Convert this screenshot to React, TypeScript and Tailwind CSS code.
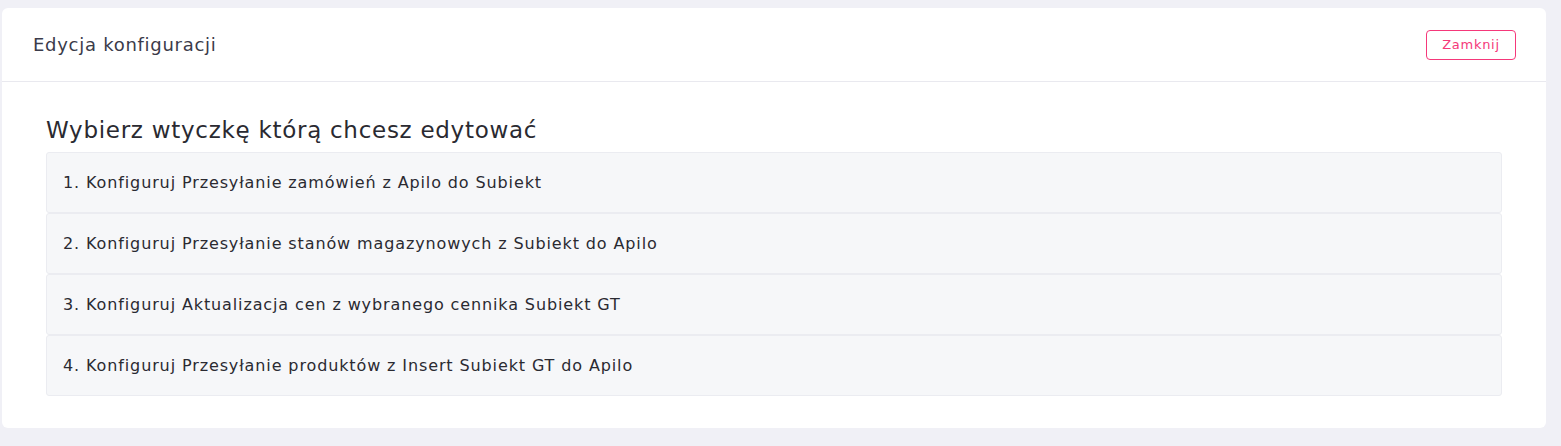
const items = [
  "1. Konfiguruj Przesyłanie zamówień z Apilo do Subiekt",
  "2. Konfiguruj Przesyłanie stanów magazynowych z Subiekt do Apilo",
  "3. Konfiguruj Aktualizacja cen z wybranego cennika Subiekt GT",
  "4. Konfiguruj Przesyłanie produktów z Insert Subiekt GT do Apilo",
];

export default function App() {
  return (
    <div className="min-h-[446px] bg-[#f0f0f6] pt-2 pl-[2px] pr-[15px] pb-[18px] font-['DejaVu_Sans',sans-serif] tracking-[0.045em] text-[#2a2a31]">
      <div className="rounded-md bg-white">
        <div className="flex h-[74px] items-center justify-between border-b border-[#e9e9ef] pl-[31px] pr-[30px]">
          <h1 className="text-[18px] text-[#3b3b4a]">Edycja konfiguracji</h1>
          <button className="h-[30px] w-[90px] rounded border border-[#f5387a] text-[13px] text-[#f5387a]">
            Zamknij
          </button>
        </div>
        <div className="px-[44px] pt-[33px] pb-[32px]">
          <h2 className="mb-[7px] text-[23px] leading-[30px]">Wybierz wtyczkę którą chcesz edytować</h2>
          <div className="flex flex-col">
            {items.map((item) => (
              <button
                key={item}
                className="flex h-[61px] items-center rounded-[3px] border border-[#ebecf1] bg-[#f6f7f9] px-4 text-left text-[16px] tracking-[0.055em]"
              >
                {item}
              </button>
            ))}
          </div>
        </div>
      </div>
    </div>
  );
}
